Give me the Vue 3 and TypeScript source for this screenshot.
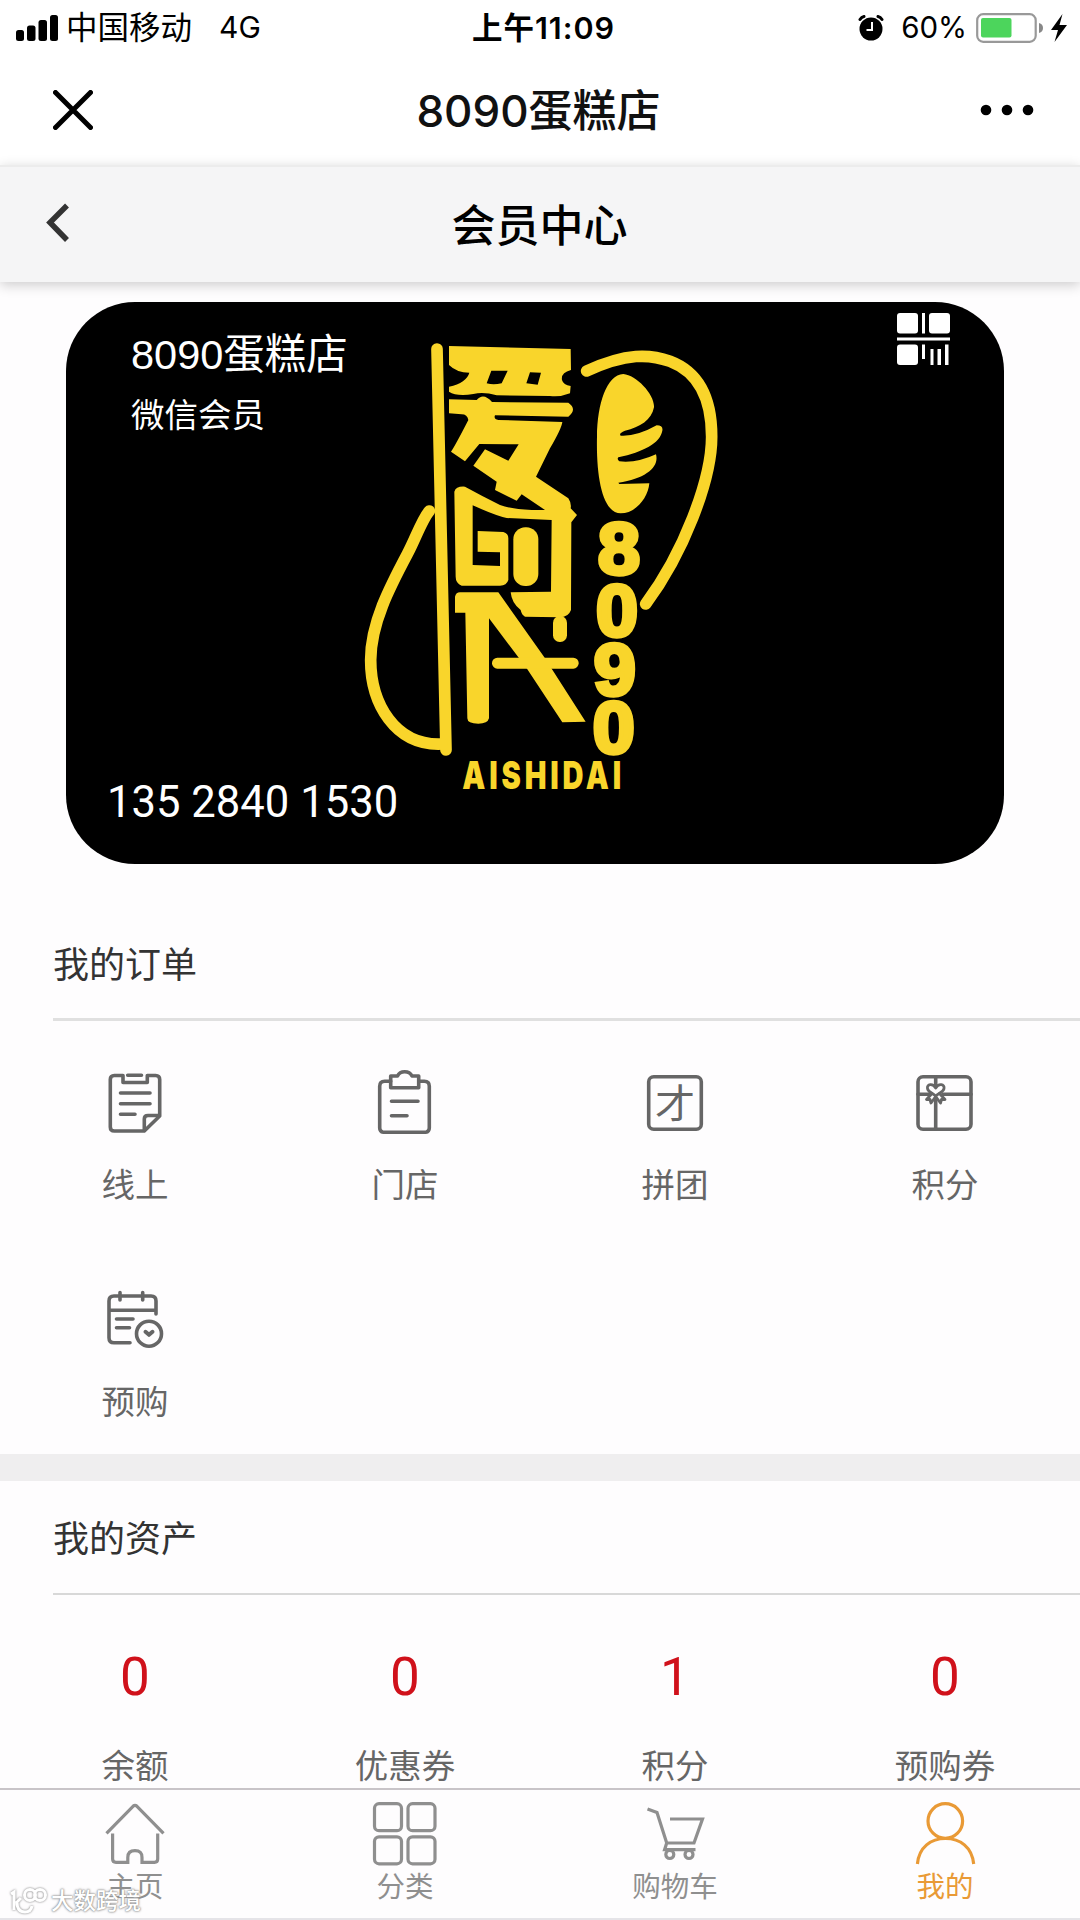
<script setup lang="ts">
import { ref } from 'vue';

interface OrderEntry {
  icon: string;
  label: string;
}

interface AssetEntry {
  value: number;
  label: string;
}

const shopName = '8090蛋糕店';
const phone = '135 2840 1530';

const orders: OrderEntry[] = [
  { icon: 'online', label: '线上' },
  { icon: 'store', label: '门店' },
  { icon: 'group', label: '拼团' },
  { icon: 'gift', label: '积分' },
  { icon: 'presale', label: '预购' },
];

const assets: AssetEntry[] = [
  { value: 0, label: '余额' },
  { value: 0, label: '优惠券' },
  { value: 1, label: '积分' },
  { value: 0, label: '预购券' },
];

const tabs = [
  { key: 'home', label: '主页' },
  { key: 'category', label: '分类' },
  { key: 'cart', label: '购物车' },
  { key: 'mine', label: '我的' },
];

const activeTab = ref('mine');
</script>

<template>
  <div class="page">
    <!-- 系统状态栏 -->
    <div class="status-bar">
      <div class="status-left">
        <svg class="signal" viewBox="0 0 42 26">
          <rect x="0" y="15" width="8" height="11" rx="2.5" />
          <rect x="11" y="10.5" width="8.5" height="15.5" rx="2.5" />
          <rect x="22.5" y="5" width="8.5" height="21" rx="2.5" />
          <rect x="34" y="0" width="8" height="26" rx="2.5" />
        </svg>
        <span class="carrier">中国移动</span>
        <span class="network">4G</span>
      </div>
      <div class="status-time">上午11:09</div>
      <div class="status-right">
        <svg class="alarm" viewBox="0 0 26 26">
          <circle cx="13" cy="14" r="11.5" />
          <path class="alarm-line" d="M2 4.5Q3.5 2 6 1.5M24 4.5Q22.5 2 20 1.5" />
          <path class="alarm-hand" d="M14 7V15H8.5" />
        </svg>
        <span class="percent">60%</span>
        <svg class="battery" viewBox="0 0 68 30">
          <rect class="battery-shell" x="1.2" y="1.2" width="58.5" height="27.6" rx="6" />
          <rect class="battery-level" x="5" y="5" width="30.5" height="19.5" rx="2" />
          <path class="battery-cap" d="M63 10Q67 11 67 15T63 20Z" />
        </svg>
        <svg class="bolt" viewBox="0 0 16 28">
          <path d="M11.5 0L0 16H7L3.5 28L16 11H8.5Z" />
        </svg>
      </div>
    </div>

    <div class="nav-bar">
      <svg class="nav-close" viewBox="0 0 40 40">
        <path d="M2.5 2.5L37.5 37.5M37.5 2.5L2.5 37.5" />
      </svg>
      <div class="nav-title">{{ shopName }}</div>
      <svg class="nav-more" viewBox="0 0 54 12">
        <circle cx="6" cy="6" r="5.3" />
        <circle cx="27" cy="6" r="5.3" />
        <circle cx="48" cy="6" r="5.3" />
      </svg>
    </div>

    <div class="sub-header">
      <svg class="back" viewBox="0 0 24 40">
        <path d="M21 2.5L4 19.5L21 37" />
      </svg>
      <div class="sub-title">会员中心</div>
    </div>

    <!-- 会员卡 -->
    <div class="card">
      <svg class="card-art" viewBox="30 60 1080 1360">
        <g class="art-line">
          <path d="M261 87L288 1290" />
          <path d="M238 573C215 600 195 660 172 702C120 800 62 910 62 1020C62 1150 135 1278 275 1272" />
          <path d="M710 153C830 98 900 102 960 124C1060 162 1085 260 1085 350C1085 480 1000 700 887 852" />
        </g>
        <path
          class="art-fill"
          fill-rule="evenodd"
          d="M297 78L662 87L663 150Q632 158 636 180Q640 195 662 198L660 220Q630 232 600 228L440 226Q400 214 370 222Q320 230 297 215V200Q350 188 358 158Q320 158 297 135ZM424 152L410 190Q430 196 455 190L473 152ZM540 157L529 190L563 194L573 158Z"
        />
        <path
          class="art-fill"
          d="M297 238L380 240Q400 216 426 246L655 248Q683 268 655 290L435 286Q430 298 445 300L637 306Q635 325 600 385L558 470L655 535Q665 550 662 565L681 585L664 607L663 870Q655 892 630 892L525 890Q515 885 512 870Q485 850 482 817L603 815L605 600L470 594Q440 588 368 556V735L450 738V697L383 695V633L460 636Q475 640 475 655V780Q470 797 450 797H335Q317 790 317 770L313 515Q318 498 345 500Q400 530 450 555Q500 572 585 570L515 523L500 542L435 510L440 485L370 437L405 388L475 422L506 373L388 372L345 424L303 395Q315 378 355 300Q352 283 335 283L297 280Z"
        />
        <rect class="art-fill" x="490" y="622" width="75" height="176" rx="36" />
        <path
          class="art-fill"
          d="M315 830Q318 817 330 817H445L582 1010L707 1205L637 1207L530 1045L417 895V1195Q413 1211 385 1211Q352 1211 352 1195L346 878H315Z"
        />
        <rect class="art-fill" x="426" y="1013" width="260" height="33" rx="16" />
        <rect class="art-fill" x="609" y="888" width="42" height="78" rx="20" />
        <path
          class="art-fill"
          d="M820 162C860 165 915 225 912 262C905 300 870 322 825 332Q805 340 812 347Q860 350 920 316Q940 316 937 332C930 370 880 395 805 412Q800 418 808 424Q860 430 918 403C928 440 890 475 805 488L808 492L898 490C895 530 860 580 812 580C760 580 738 480 741 350C742 250 770 165 820 162Z"
        />
        <g class="art-digits">
          <text x="807" y="762" textLength="126" lengthAdjust="spacingAndGlyphs">8</text>
          <text x="801" y="948" textLength="126" lengthAdjust="spacingAndGlyphs">0</text>
          <text x="794" y="1125" textLength="126" lengthAdjust="spacingAndGlyphs">9</text>
          <text x="791" y="1298" textLength="126" lengthAdjust="spacingAndGlyphs">0</text>
        </g>
        <text class="art-name" x="337" y="1406" textLength="488" lengthAdjust="spacingAndGlyphs">AISHIDAI</text>
      </svg>
      <div class="card-head">
        <div>
          <div class="card-shop">{{ shopName }}</div>
          <div class="card-level">微信会员</div>
        </div>
        <svg class="card-code" viewBox="0 0 53 52">
          <rect x="0" y="0" width="21" height="20.5" rx="3" />
          <rect x="25" y="0" width="3" height="20.5" />
          <rect x="32" y="0" width="21" height="20.5" rx="3" />
          <rect x="0" y="24.5" width="53" height="3" />
          <rect x="0" y="31.5" width="21" height="20.5" rx="3" />
          <rect x="25" y="31.5" width="3" height="14.5" />
          <rect x="33.5" y="36" width="3" height="16" />
          <rect x="40.5" y="36" width="3.5" height="16" />
          <rect x="48" y="31.5" width="3.5" height="20.5" />
        </svg>
      </div>
      <div class="card-phone">{{ phone }}</div>
    </div>

    <!-- 我的订单 -->
    <div class="section section-orders">
      <div class="section-title">我的订单</div>
      <div class="order-grid">
        <div v-for="item in orders" :key="item.icon" class="order-item">
          <svg class="order-icon" viewBox="0 0 64 64">
            <g v-if="item.icon === 'online'">
              <path d="M20 5.5H11.3Q7.3 5.5 7.3 9.5V57Q7.3 61 11.3 61H41.3L56.7 46V9.5Q56.7 5.5 52.7 5.5H44.3V12.5H20Z" class="clip-gap" />
              <path d="M24.7 5.3H38.5M17.5 23H47M17.5 33.7H47M17.5 44.3H32M41.3 60V49Q41.3 45.5 45 45.5H56" />
            </g>
            <g v-else-if="item.icon === 'store'">
              <path d="M17.7 11.3H11.7Q6.7 11.3 6.7 16.3V57.7Q6.7 62.3 11.7 62.3H51.3Q56.3 62.3 56.3 57.7V16.3Q56.3 11.3 51.3 11.3H45.7" />
              <path d="M17.7 17.7V6H24.5Q26.5 1.8 31.7 1.8T39 6H45.7V17.7ZM18.5 31.3H45M18.5 45.7H34" />
            </g>
            <g v-else-if="item.icon === 'group'">
              <rect x="5.7" y="6.7" width="52.6" height="52.6" rx="5" />
              <text class="group-char" x="32" y="47.5">才</text>
            </g>
            <g v-else-if="item.icon === 'gift'">
              <rect x="5" y="6.7" width="53" height="52.6" rx="5" />
              <path d="M22.7 7V15M22.7 28V59M5 24.3H16M30 24.3H58" />
              <path class="thin" d="M22.7 18C20 13 13.5 14 14.5 18.5C15 22 19 22.5 22.7 26C26.5 22.5 30.5 22 31 18.5C32 14 25.5 13 22.7 18Z" />
              <path class="thin" d="M19 23.5L13.5 29.5L17 29.5L18 33L22.7 26.5L27.5 33L28.5 29.5L32 29.5L26.5 23.5" />
            </g>
            <g v-else>
              <path d="M27 55.7H11Q6 55.7 6 50.7V14Q6 9 11 9H48Q53 9 53 14V27M6 23.3H53M17 5.5V13M39.7 5.5V13M13.5 32H30M13.5 40.7H26.5" />
              <circle cx="46" cy="46.7" r="12.5" />
              <path class="bold" d="M42.5 44.8L46 47.8L49.5 44.8" />
            </g>
          </svg>
          <div class="item-label">{{ item.label }}</div>
        </div>
      </div>
    </div>

    <div class="divider"></div>

    <!-- 我的资产 -->
    <div class="section section-assets">
      <div class="section-title">我的资产</div>
      <div class="asset-row">
        <div v-for="item in assets" :key="item.label" class="asset-item">
          <div class="asset-value">{{ item.value }}</div>
          <div class="item-label">{{ item.label }}</div>
        </div>
      </div>
    </div>

    <!-- 底部导航 -->
    <div class="tab-bar">
      <div
        v-for="tab in tabs"
        :key="tab.key"
        class="tab"
        :class="{ active: tab.key === activeTab }"
        @click="activeTab = tab.key"
      >
        <svg class="tab-icon" viewBox="0 0 64 64">
          <path
            v-if="tab.key === 'home'"
            d="M3.5 32.3L30 5.3Q32 3.5 34 5.3L60.5 32.3M9.6 32.5V58Q9.6 61.3 13 61.3H24.8V56.5Q24.8 49.7 32 49.7T39 56.5V61.3H51.5Q54.7 61.3 54.7 58V32.5"
          />
          <g v-else-if="tab.key === 'category'">
            <rect x="1.5" y="2.7" width="27" height="27" rx="4.5" />
            <rect x="35" y="2.7" width="27" height="27" rx="4.5" />
            <rect x="1.5" y="35.8" width="27" height="27" rx="4.5" />
            <rect x="35" y="35.8" width="27" height="27" rx="4.5" />
          </g>
          <g v-else-if="tab.key === 'cart'">
            <path d="M4.5 8L14 11.5L23.7 42H51L59.5 18H27M23.7 42L21.6 48.7H52.5" />
            <circle cx="26.8" cy="53.5" r="4" />
            <circle cx="46" cy="53.5" r="4" />
          </g>
          <g v-else>
            <circle cx="32.3" cy="20" r="17.3" />
            <path d="M4.4 63C6 46 18 37.5 32.5 37.5S59 46 60.7 63" />
          </g>
        </svg>
        <div class="tab-label">{{ tab.label }}</div>
      </div>
    </div>

    <div class="watermark">
      <svg class="watermark-icon" viewBox="0 0 40 30">
        <path d="M3 7L6 5V23M13 11L9 15Q9 25 17 25Q23 25 24 19" />
        <circle cx="22" cy="8" r="5.5" />
        <circle cx="32" cy="8" r="5.5" />
      </svg>
      <span>大数跨境</span>
    </div>
  </div>
</template>

<style>
body {
  margin: 0;
  background: #fefdfe;
}
</style>

<style scoped>
.page {
  position: relative;
  display: flex;
  flex-direction: column;
  width: 1080px;
  height: 1920px;
  overflow: hidden;
  font-family: 'Liberation Sans', 'Noto Sans CJK SC', sans-serif;
  color: #333;
  background: #fefdfe;
}

svg {
  display: block;
  flex: none;
}

/* 状态栏 */
.status-bar {
  display: grid;
  grid-template-columns: 1fr auto 1fr;
  align-items: center;
  height: 55px;
  padding: 0 13px 0 16px;
  font-family: Inter, 'Noto Sans CJK SC', sans-serif;
  font-size: 30px;
  line-height: 55px;
  color: #000;
  background: #fff;
}

.status-left,
.status-right {
  display: flex;
  align-items: center;
}

.status-right {
  justify-content: flex-end;
}

.signal {
  width: 42px;
  height: 26px;
}

.carrier {
  margin-left: 8px;
  font-size: 31.5px;
}

.network {
  margin-left: 27px;
}

.status-time {
  padding-left: 4px;
  font-size: 30.5px;
  font-weight: 600;
  letter-spacing: 1px;
}

.alarm {
  width: 26px;
  height: 26px;
  margin-right: 17px;
}

.alarm-line {
  fill: none;
  stroke: #000;
  stroke-width: 3;
  stroke-linecap: round;
}

.alarm-hand {
  fill: none;
  stroke: #fff;
  stroke-width: 2;
}

.percent {
  margin-right: 9px;
  font-size: 29.5px;
}

.battery {
  width: 68px;
  height: 30px;
  margin-right: 7px;
}

.battery-shell {
  fill: #fff;
  stroke: #999;
  stroke-width: 2.2;
}

.battery-level {
  fill: #4cd55c;
}

.battery-cap {
  fill: #888;
}

.bolt {
  width: 16px;
  height: 28px;
}

/* 导航栏 */
.nav-bar {
  display: flex;
  align-items: center;
  justify-content: space-between;
  height: 110px;
  padding: 0 46px 0 53px;
  background: #fff;
}

.nav-close {
  width: 40px;
  height: 40px;
  margin-right: 4px;
  fill: none;
  stroke: #000;
  stroke-width: 5;
  stroke-linecap: round;
}

.nav-title {
  padding-top: 2px;
  font-family: Inter, 'Noto Sans CJK SC', sans-serif;
  font-size: 44px;
  font-weight: 500;
  line-height: 60px;
  color: #111;
}

.nav-more {
  width: 54px;
  height: 12px;
}

.sub-header {
  display: flex;
  align-items: center;
  height: 115px;
  padding: 0 46px;
  background: #f5f5f6;
  border-top: 2px solid #ececec;
  box-shadow: 0 3px 12px rgb(0 0 0 / 20%);
}

.back {
  width: 24px;
  height: 40px;
  margin-top: -4px;
  fill: none;
  stroke: #333;
  stroke-width: 5.5;
}

.sub-title {
  flex: 1;
  padding: 4px 25px 0 0;
  font-size: 44px;
  font-weight: 500;
  line-height: 60px;
  color: #000;
  text-align: center;
}

/* 会员卡 */
.card {
  position: relative;
  display: flex;
  flex-direction: column;
  justify-content: space-between;
  box-sizing: border-box;
  width: 938px;
  height: 562px;
  padding: 11px 54px 33px 41px;
  margin: 20px 0 0 66px;
  color: #fff;
  background: #000;
  border-radius: 69px;
}

.card-art {
  position: absolute;
  top: 38px;
  left: 294px;
  width: 360px;
  height: 453.33px;
  overflow: visible;
}

.art-fill {
  fill: #f9d52b;
}

.art-line {
  fill: none;
  stroke: #f9d52b;
  stroke-width: 35;
  stroke-linecap: round;
}

.art-digits {
  font-size: 216px;
  font-weight: 700;
  text-anchor: middle;
  fill: #f9d52b;
  stroke: #f9d52b;
  stroke-width: 13;
}

.art-name {
  font-family: Inter, sans-serif;
  font-size: 114px;
  font-weight: 900;
  letter-spacing: 15px;
  fill: #f9d52b;
}

.card-head {
  position: relative;
  display: flex;
  justify-content: space-between;
  padding-left: 24px;
}

.card-shop {
  margin-top: 12px;
  font-size: 41.5px;
  line-height: 60px;
}

.card-level {
  margin-top: 7px;
  font-size: 33.5px;
  line-height: 48px;
}

.card-code {
  width: 53px;
  height: 52px;
  fill: #fff;
}

.card-phone {
  position: relative;
  font-family: Roboto, sans-serif;
  font-size: 43.6px;
  line-height: 56px;
}

/* 分区 */
.section-orders {
  height: 545px;
  padding-top: 45px;
}

.section-title {
  padding-top: 4px;
  margin-left: 53px;
  font-size: 36px;
  line-height: 105px;
  border-bottom: 3px solid #e0e0e0;
}

.order-grid {
  display: grid;
  grid-template-columns: repeat(4, 1fr);
  row-gap: 84px;
  padding-top: 49px;
}

.order-item,
.asset-item {
  display: flex;
  flex-direction: column;
  align-items: center;
}

.order-icon {
  width: 64px;
  height: 64px;
  margin-bottom: 35px;
  fill: none;
  stroke: #666;
  stroke-width: 3.6;
  stroke-linecap: round;
  stroke-linejoin: round;
}

.order-icon .thin {
  stroke-width: 2.8;
}

.order-icon .bold {
  stroke-width: 4;
}

.group-char {
  font-family: 'Noto Sans CJK SC', sans-serif;
  font-size: 40px;
  text-anchor: middle;
  fill: #666;
  stroke: none;
}

.item-label {
  font-size: 33.5px;
  line-height: 34px;
  color: #666;
}

.divider {
  flex: none;
  height: 27px;
  background: #efeeef;
}

.section-assets {
  height: 307px;
}

.section-assets .section-title {
  padding-top: 5px;
  line-height: 107px;
  border-bottom-width: 2px;
  border-bottom-color: #d8d8d8;
}

.asset-row {
  display: grid;
  grid-template-columns: repeat(4, 1fr);
  padding-top: 52px;
}

.asset-value {
  margin-bottom: 43px;
  font-family: Roboto, sans-serif;
  font-size: 53px;
  line-height: 60px;
  color: #d0111b;
}

/* 底部导航 */
.tab-bar {
  display: grid;
  grid-template-columns: repeat(4, 1fr);
  box-sizing: border-box;
  height: 132px;
  padding-top: 11px;
  border-top: 2px solid #c8c4c8;
  border-bottom: 2px solid #e5e4e8;
}

.tab {
  display: flex;
  flex-direction: column;
  align-items: center;
  color: #8f8f8f;
}

.tab.active {
  color: #e99a36;
}

.tab-icon {
  width: 64px;
  height: 64px;
  margin-bottom: 8px;
  overflow: visible;
  fill: none;
  stroke: currentcolor;
  stroke-width: 3.2;
}

.tab-label {
  font-size: 28.5px;
  line-height: 28px;
}

/* 左下角水印 */
.watermark {
  position: absolute;
  bottom: 3px;
  left: 8px;
  display: flex;
  align-items: center;
  font-size: 22.5px;
  font-weight: 500;
  line-height: 30px;
  color: #fff;
  text-shadow:
    0 0 2px #888,
    0 0 3px #aaa,
    0 0 1px #999;
}

.watermark-icon {
  width: 40px;
  height: 30px;
  margin-right: 3px;
  fill: none;
  stroke: #fff;
  stroke-width: 3;
  filter: drop-shadow(0 0 1px #777);
}
</style>
